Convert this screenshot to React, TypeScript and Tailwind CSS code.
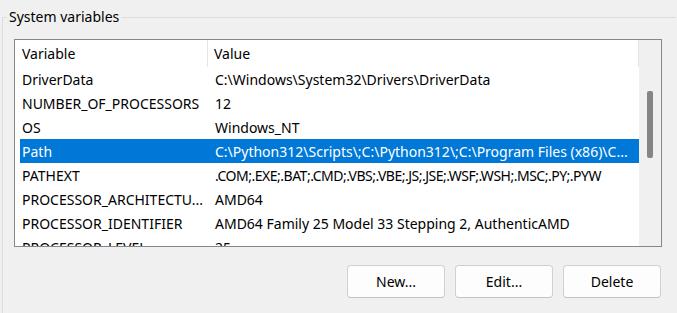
import React from "react";

const rows: { name: string; value: string; selected?: boolean; tight?: boolean }[] = [
  { name: "DriverData", value: "C:\\Windows\\System32\\Drivers\\DriverData" },
  { name: "NUMBER_OF_PROCESSORS", value: "12" },
  { name: "OS", value: "Windows_NT" },
  {
    name: "Path",
    value: "C:\\Python312\\Scripts\\;C:\\Python312\\;C:\\Program Files (x86)\\C...",
    selected: true,
  },
  {
    name: "PATHEXT",
    value: ".COM;.EXE;.BAT;.CMD;.VBS;.VBE;.JS;.JSE;.WSF;.WSH;.MSC;.PY;.PYW",
    tight: true,
  },
  { name: "PROCESSOR_ARCHITECTU...", value: "AMD64" },
  { name: "PROCESSOR_IDENTIFIER", value: "AMD64 Family 25 Model 33 Stepping 2, AuthenticAMD" },
  { name: "PROCESSOR_LEVEL", value: "25" },
];

export default function App() {
  return (
    <div
      className="w-[677px] h-[313px] bg-[#f0f0f0] overflow-hidden text-[14px] text-black"
      style={{ fontFamily: '"Noto Sans", "Open Sans", sans-serif' }}
    >
      <fieldset className="mt-[7px] ml-[2px] w-[674px] h-[306px] border-t border-l border-[#dcdcdc] pl-[11px] pt-[12px]">
        <legend className="-ml-[7px] px-[2px] leading-[20px]">System variables</legend>
        <div className="w-[648px] h-[208px] border border-[#828790] bg-white flex">
          <div className="flex-1 min-w-0 flex flex-col overflow-hidden">
            <div className="h-[27px] flex items-center shrink-0">
              <div className="w-[193px] shrink-0 pl-[7px] h-full flex items-center border-r border-[#e5e5e5]">
                Variable
              </div>
              <div className="flex-1 pl-[6px] h-full flex items-center border-r border-[#e5e5e5]">
                Value
              </div>
            </div>
            <div className="flex flex-col">
              {rows.map((r) => (
                <div
                  key={r.name}
                  className={
                    "ml-[5px] h-[24px] flex items-center shrink-0 whitespace-nowrap " +
                    (r.selected ? "bg-[#0078d7] text-white" : "")
                  }
                >
                  <div className="w-[188px] shrink-0 pl-[2px] overflow-hidden">{r.name}</div>
                  <div
                    className={
                      "flex-1 min-w-0 pl-[7px] overflow-hidden " +
                      (r.tight ? "tracking-[-0.5px]" : "")
                    }
                  >
                    {r.value}
                  </div>
                </div>
              ))}
            </div>
          </div>
          <div className="w-[22px] shrink-0 h-full bg-[#f0f0f0] pt-[51px] pl-[8px]">
            <div className="w-[6px] h-[67px] bg-[#858585] rounded-[2px]" />
          </div>
        </div>
        <div className="w-[648px] flex justify-end gap-[10px] mt-[18px] pr-[1px]">
          {["New...", "Edit...", "Delete"].map((b) => (
            <button
              key={b}
              className="w-[98px] h-[33px] bg-[#fdfdfd] border border-[#d0d0d0] border-b-[#c4c4c4] rounded-[4px] text-[14px]"
            >
              {b}
            </button>
          ))}
        </div>
      </fieldset>
    </div>
  );
}
